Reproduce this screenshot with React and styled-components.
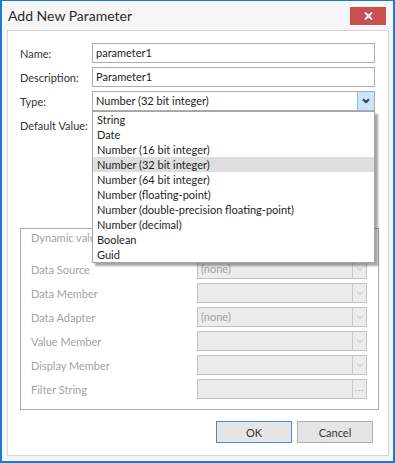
import React from 'react';
import styled, { createGlobalStyle } from 'styled-components';

const Global = createGlobalStyle`
  html, body { margin: 0; padding: 0; background: #ffffff; }
  body { font-family: Lato, "Open Sans", "Liberation Sans", sans-serif; font-size: 11px; color: #333; }
  * { box-sizing: border-box; }
`;

const Window = styled.div`
  width: 395px;
  height: 463px;
  border: 2px solid #1b7ad2;
  border-top-width: 1px;
  background: #f6f6f6;
  display: flex;
  flex-direction: column;
`;

const TitleBar = styled.div`
  height: 29px;
  flex: none;
  display: flex;
  justify-content: space-between;
  align-items: flex-start;
  padding: 0 7px 0 6px;
`;

const Title = styled.div`
  font-size: 14px;
  line-height: 30px;
  color: #2b2b2b;
`;

const CloseButton = styled.div`
  margin-top: 6px;
  width: 36px;
  height: 18px;
  background: #c75050;
  display: flex;
  align-items: center;
  justify-content: center;
`;

const Panel = styled.div`
  flex: 1;
  margin: 0 4px 5px 5px;
  border: 1px solid #d6d6d6;
  background: #ffffff;
  padding: 12px 12px 0 12px;
  display: flex;
  flex-direction: column;
`;

const FormGrid = styled.div`
  display: grid;
  grid-template-columns: 72px 283px;
  grid-auto-rows: 20px;
  row-gap: 4px;
  align-items: center;
`;

const Label = styled.div`
  color: ${(p) => (p.$disabled ? '#a3a3a3' : '#333333')};
  white-space: nowrap;
`;

const Field = styled.div`
  position: relative;
  height: 20px;
  border: 1px solid ${(p) => (p.$disabled ? '#c2c2c2' : '#acacac')};
  background: ${(p) => (p.$disabled ? '#ececec' : '#ffffff')};
  display: flex;
  align-items: stretch;
`;

const FieldText = styled.div`
  flex: 1;
  padding-left: 3px;
  line-height: 18px;
  color: ${(p) => (p.$disabled ? '#a3a3a3' : '#222222')};
  white-space: nowrap;
  overflow: hidden;
`;

const DropButton = styled.div`
  width: ${(p) => (p.$active ? '17px' : '14px')};
  flex: none;
  display: flex;
  align-items: center;
  justify-content: center;
  background: ${(p) => (p.$active ? '#cde4f8' : 'transparent')};
  border-left: 1px solid ${(p) => (p.$active ? '#8fbfed' : '#c8c8c8')};
  color: ${(p) => (p.$active ? '#333' : '#b8b8b8')};
  font-size: 10px;
  letter-spacing: 0.5px;
  line-height: 1;
`;

const ListPopup = styled.div`
  position: absolute;
  left: -1px;
  top: 19px;
  width: 283px;
  border: 1px solid #a5a5a5;
  background: #ffffff;
  box-shadow: 3px 3px 2px rgba(0, 0, 0, 0.35);
  z-index: 10;
`;

const ListItem = styled.div`
  height: 15px;
  line-height: 15px;
  padding-left: 4px;
  color: #1e1e1e;
  background: ${(p) => (p.$selected ? '#dedede' : 'transparent')};
  white-space: nowrap;
`;

const GroupBox = styled.div`
  margin-top: 93px;
  width: 359px;
  height: 182px;
  border: 1px solid #ababab;
  padding: 0 10px;
  display: flex;
  flex-direction: column;
`;

const GroupCaption = styled.div`
  height: 18px;
  line-height: 18px;
  color: #a3a3a3;
  white-space: nowrap;
`;

const GroupGrid = styled.div`
  margin-top: 12px;
  display: grid;
  grid-template-columns: 166px 170px;
  grid-auto-rows: 20px;
  row-gap: 4px;
  align-items: center;
`;

const ButtonRow = styled.div`
  margin-top: 11px;
  margin-right: 3px;
  display: flex;
  justify-content: flex-end;
  gap: 5px;
`;

const Button = styled.div`
  width: 76px;
  height: 22px;
  border: 1px solid ${(p) => (p.$primary ? '#3d8ee0' : '#adadad')};
  background: #e5e5e5;
  display: flex;
  align-items: center;
  justify-content: center;
  color: #333;
`;

const Chevron = ({ color = '#333', bold }) => (
  <svg width="8" height="6" viewBox="0 0 8 6">
    <path
      d="M1 1.2 L4 4.2 L7 1.2"
      fill="none"
      stroke={color}
      strokeWidth={bold ? 2 : 1}
    />
  </svg>
);

const types = [
  'String',
  'Date',
  'Number (16 bit integer)',
  'Number (32 bit integer)',
  'Number (64 bit integer)',
  'Number (floating-point)',
  'Number (double-precision floating-point)',
  'Number (decimal)',
  'Boolean',
  'Guid',
];

const groupRows = [
  { label: 'Data Source', value: '(none)' },
  { label: 'Data Member', value: '' },
  { label: 'Data Adapter', value: '(none)' },
  { label: 'Value Member', value: '' },
  { label: 'Display Member', value: '' },
  { label: 'Filter String', value: '', ellipsis: true },
];

export default function App() {
  return (
    <>
      <Global />
      <Window>
        <TitleBar>
          <Title>Add New Parameter</Title>
          <CloseButton>
            <svg width="9" height="8" viewBox="0 0 9 8">
              <path d="M1 0.5 L8 7.5 M8 0.5 L1 7.5" stroke="#fff" strokeWidth="1.8" />
            </svg>
          </CloseButton>
        </TitleBar>
        <Panel>
          <FormGrid>
            <Label>Name:</Label>
            <Field>
              <FieldText>parameter1</FieldText>
            </Field>
            <Label>Description:</Label>
            <Field>
              <FieldText>Parameter1</FieldText>
            </Field>
            <Label>Type:</Label>
            <Field>
              <FieldText>Number (32 bit integer)</FieldText>
              <DropButton $active>
                <Chevron bold color="#2e3a4a" />
              </DropButton>
              <ListPopup>
                {types.map((t, i) => (
                  <ListItem key={t} $selected={i === 3}>
                    {t}
                  </ListItem>
                ))}
              </ListPopup>
            </Field>
            <Label>Default Value:</Label>
            <div />
          </FormGrid>
          <GroupBox>
            <GroupCaption>Dynamic values</GroupCaption>
            <GroupGrid>
              {groupRows.map((r) => (
                <React.Fragment key={r.label}>
                  <Label $disabled>{r.label}</Label>
                  <Field $disabled>
                    <FieldText $disabled>{r.value}</FieldText>
                    <DropButton>
                      {r.ellipsis ? '···' : <Chevron color="#c4c4c4" />}
                    </DropButton>
                  </Field>
                </React.Fragment>
              ))}
            </GroupGrid>
          </GroupBox>
          <ButtonRow>
            <Button $primary>OK</Button>
            <Button>Cancel</Button>
          </ButtonRow>
        </Panel>
      </Window>
    </>
  );
}
